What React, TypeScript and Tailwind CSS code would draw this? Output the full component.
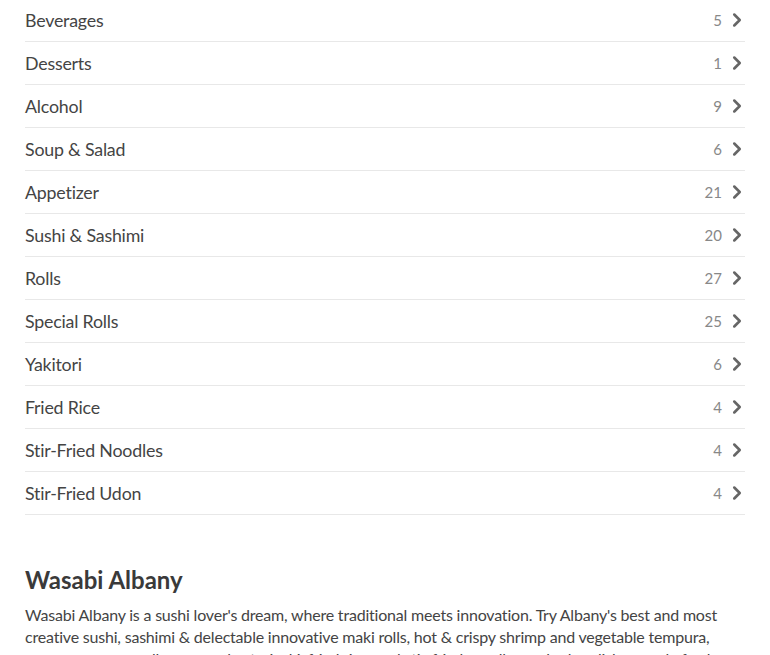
import { ChevronRight } from 'lucide-react'

const categories: [string, number][] = [
  ['Beverages', 5],
  ['Desserts', 1],
  ['Alcohol', 9],
  ['Soup & Salad', 6],
  ['Appetizer', 21],
  ['Sushi & Sashimi', 20],
  ['Rolls', 27],
  ['Special Rolls', 25],
  ['Yakitori', 6],
  ['Fried Rice', 4],
  ['Stir-Fried Noodles', 4],
  ['Stir-Fried Udon', 4],
]

export default function App() {
  return (
    <div className="h-[655px] overflow-hidden bg-white px-[25px] text-[#444]" style={{ fontFamily: 'Lato, "Open Sans", sans-serif' }}>
      {/* Category list */}
      <ul className="-mt-[1px]">
        {categories.map(([name, count]) => (
          <li key={name} className="flex h-[43px] items-center justify-between border-b border-[#e8e8e8]">
            <span className="text-[17.8px] tracking-[-0.2px] text-[#444]">{name}</span>
            <span className="flex items-center">
              <span className="text-[15px] text-[#888]">{count}</span>
              <ChevronRight className="ml-[4px] mr-[-3px] h-[22px] w-[22px] text-[#666]" strokeWidth={2.8} />
            </span>
          </li>
        ))}
      </ul>

      {/* About */}
      <section className="pt-[50px]">
        <h2 className="text-[24px] font-bold leading-[30px] text-[#3a3a3a]">Wasabi Albany</h2>
        <p className="mt-[9px] text-[16px] leading-[22px] tracking-[-0.2px] text-[#444]">
          Wasabi Albany is a sushi lover's dream, where traditional meets innovation. Try Albany's best and most
          creative sushi, sashimi &amp; delectable innovative maki rolls, hot &amp; crispy shrimp and vegetable tempura,
          savory ramen noodle soups, plus teriyaki, fried rice, and stir-fried noodles and udon dishes made fresh.
        </p>
      </section>
    </div>
  )
}
